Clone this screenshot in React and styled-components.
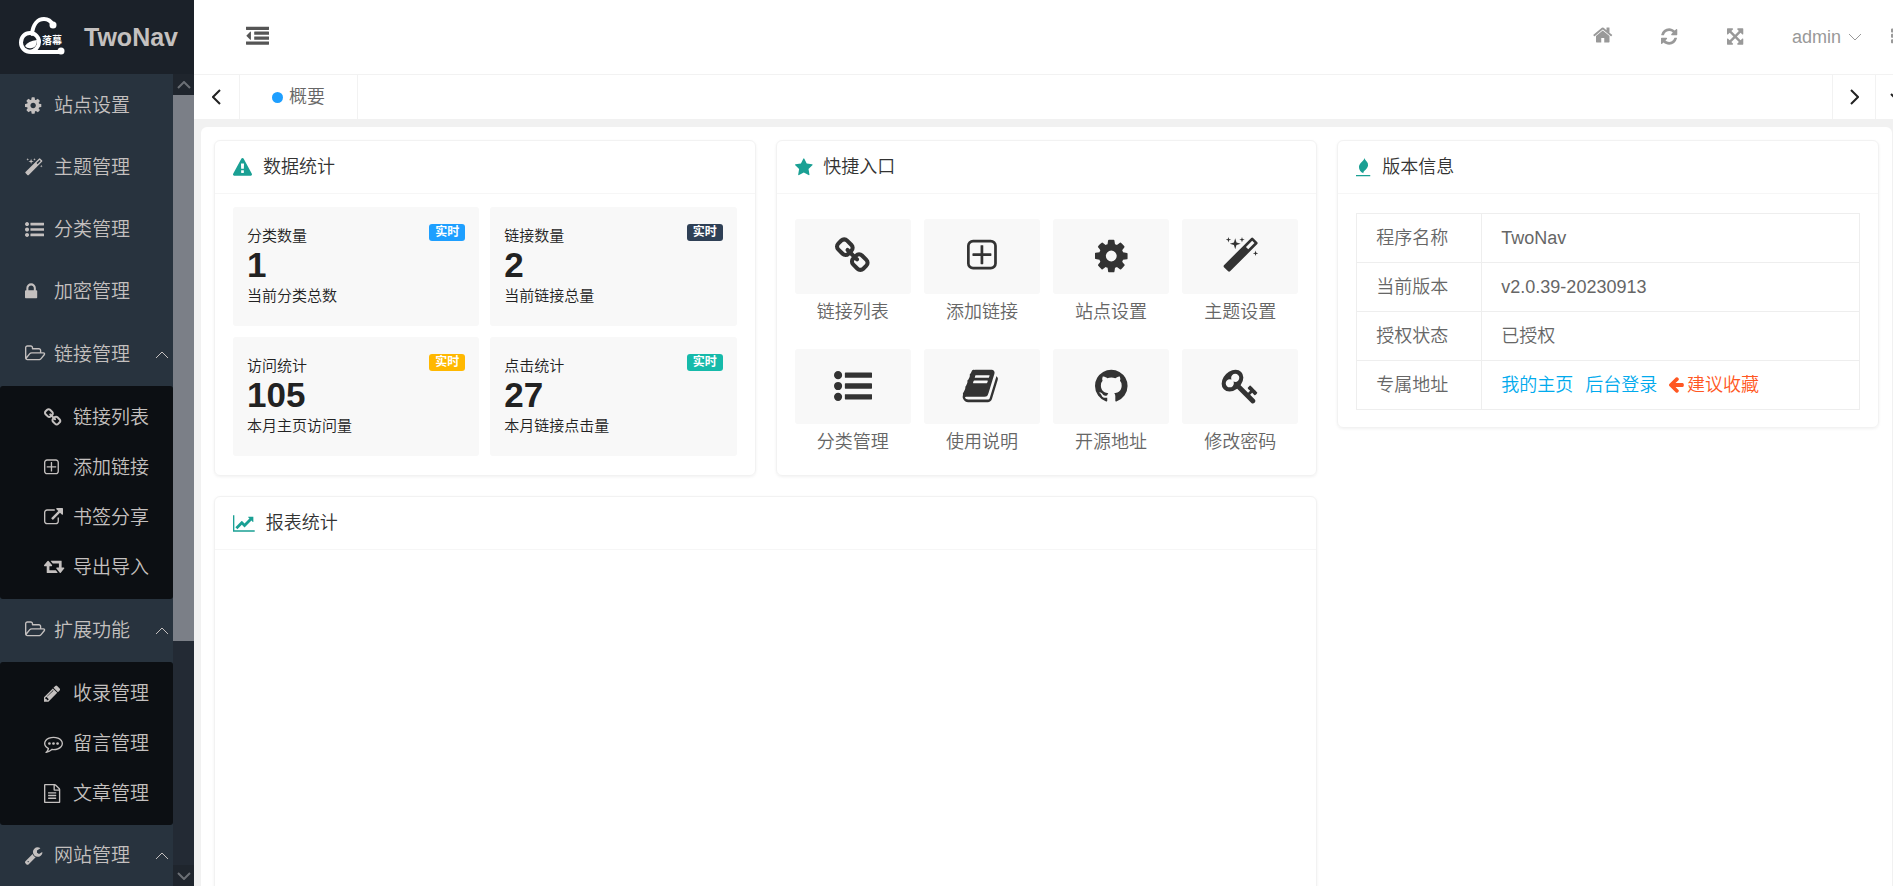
import React from "react";
import styled, { createGlobalStyle } from "styled-components";

// [viewBox, path]
const shapes = {
	cog: ["128 0 1536 1792", "M1152 896q0-106-75-181t-181-75-181 75-75 181 75 181 181 75 181-75 75-181zm512-109v222q0 12-8 23t-20 13l-185 28q-19 54-39 91 35 50 107 138 10 12 10 25t-9 23q-27 37-99 108t-94 71q-12 0-26-9l-138-108q-44 23-91 38-16 136-29 186-7 28-36 28h-222q-14 0-24.5-8.5t-11.5-21.5l-28-184q-49-16-90-37l-141 107q-10 9-25 9-14 0-25-11-126-114-165-168-7-10-7-23 0-12 8-23 15-21 51-66.5t54-70.5q-27-50-41-99l-183-27q-13-2-21-12.5t-8-23.5v-222q0-12 8-23t19-13l186-28q14-46 39-92-40-57-107-138-10-12-10-24 0-10 9-23 26-36 98.5-107.5t94.5-71.5q13 0 26 10l138 107q44-23 91-38 16-136 29-186 7-28 36-28h222q14 0 24.5 8.5t11.5 21.5l28 184q49 16 90 37l142-107q9-9 24-9 13 0 25 10 129 119 165 170 7 8 7 22 0 12-8 23-15 21-51 66.5t-54 70.5q26 50 41 98l183 28q13 2 21 12.5t8 23.5z"],
	magic: ["64 0 1664 1792", "M1254 581l293-293-107-107-293 293zm447-293q0 27-18 45l-1286 1286q-18 18-45 18t-45-18l-198-198q-18-18-18-45t18-45l1286-1286q18-18 45-18t45 18l198 198q18 18 18 45zm-1351-190l98 30-98 30-30 98-30-98-98-30 98-30 30-98zm350 162l196 60-196 60-60 196-60-196-196-60 196-60 60-196zm930 478l98 30-98 30-30 98-30-98-98-30 98-30 30-98zm-640-640l98 30-98 30-30 98-30-98-98-30 98-30 30-98z"],
	list: ["0 0 1792 1792", "M384 1408q0 80-56 136t-136 56-136-56-56-136 56-136 136-56 136 56 56 136zm0-512q0 80-56 136t-136 56-136-56-56-136 56-136 136-56 136 56 56 136zm1408 416v192q0 13-9.5 22.5t-22.5 9.5h-1216q-13 0-22.5-9.5t-9.5-22.5v-192q0-13 9.5-22.5t22.5-9.5h1216q13 0 22.5 9.5t9.5 22.5zm-1408-928q0 80-56 136t-136 56-136-56-56-136 56-136 136-56 136 56 56 136zm1408 416v192q0 13-9.5 22.5t-22.5 9.5h-1216q-13 0-22.5-9.5t-9.5-22.5v-192q0-13 9.5-22.5t22.5-9.5h1216q13 0 22.5 9.5t9.5 22.5zm0-512v192q0 13-9.5 22.5t-22.5 9.5h-1216q-13 0-22.5-9.5t-9.5-22.5v-192q0-13 9.5-22.5t22.5-9.5h1216q13 0 22.5 9.5t9.5 22.5z"],
	lock: ["320 0 1152 1792", "M640 768h512v-192q0-106-75-181t-181-75-181 75-75 181v192zm832 96v576q0 40-28 68t-68 28h-960q-40 0-68-28t-28-68v-576q0-40 28-68t68-28h32v-192q0-184 132-316t316-132 316 132 132 316v192h32q40 0 68 28t28 68z"],
	folder: ["-64 0 1910 1792", "M1717 931q0-35-53-35h-1088q-40 0-85.5 21.5t-71.5 52.5l-294 363q-18 24-18 40 0 35 53 35h1088q40 0 86-22t71-53l294-363q18-22 18-39zm-1141-163h768v-160q0-40-28-68t-68-28h-576q-40 0-68-28t-28-68v-64q0-40-28-68t-68-28h-320q-40 0-68 28t-28 68v853l256-315q44-53 116-87.5t140-34.5zm1269 163q0 62-46 120l-295 363q-43 53-116 87.5t-140 34.5h-1088q-92 0-158-66t-66-158v-960q0-92 66-158t158-66h320q92 0 158 66t66 158v32h544q92 0 158 66t66 158v160h192q54 0 99 24.5t67 70.5q15 32 15 68z"],
	link: ["80 0 1632 1792", "M1520 1216q0-40-28-68l-208-208q-28-28-68-28-42 0-72 32 3 3 19 18.5t21.5 21.5 15 19 13 25.5 3.5 27.5q0 40-28 68t-68 28q-15 0-27.5-3.5t-25.5-13-19-15-21.5-21.5-18.5-19q-33 31-33 73 0 40 28 68l206 207q27 27 68 27 40 0 68-26l147-146q28-28 28-67zm-703-705q0-40-28-68l-206-207q-28-28-68-28-39 0-68 27l-147 146q-28 28-28 67 0 40 28 68l208 208q27 27 68 27 42 0 72-31-3-3-19-18.5t-21.5-21.5-15-19-13-25.5-3.5-27.5q0-40 28-68t68-28q15 0 27.5 3.5t25.5 13 19 15 21.5 21.5 18.5 19q33-31 33-73zm895 705q0 120-85 203l-147 146q-83 83-203 83-121 0-204-85l-206-207q-83-83-83-203 0-123 88-209l-88-88q-86 88-208 88-120 0-204-84l-208-208q-84-84-84-204t85-203l147-146q83-83 203-83 121 0 204 85l206 207q83 83 83 203 0 123-88 209l88 88q86-88 208-88 120 0 204 84l208 208q84 84 84 204z"],
	plus: ["192 0 1408 1792", "M1344 800v64q0 14-9 23t-23 9h-352v352q0 14-9 23t-23 9h-64q-14 0-23-9t-9-23v-352h-352q-14 0-23-9t-9-23v-64q0-14 9-23t23-9h352v-352q0-14 9-23t23-9h64q14 0 23 9t9 23v352h352q14 0 23 9t9 23zm128 448v-832q0-66-47-113t-113-47h-832q-66 0-113 47t-47 113v832q0 66 47 113t113 47h832q66 0 113-47t47-113zm128-832v832q0 119-84.5 203.5t-203.5 84.5h-832q-119 0-203.5-84.5t-84.5-203.5v-832q0-119 84.5-203.5t203.5-84.5h832q119 0 203.5 84.5t84.5 203.5z"],
	external: ["0 0 1792 1792", "M1408 928v320q0 119-84.5 203.5t-203.5 84.5h-832q-119 0-203.5-84.5t-84.5-203.5v-832q0-119 84.5-203.5t203.5-84.5h704q14 0 23 9t9 23v64q0 14-9 23t-23 9h-704q-66 0-113 47t-47 113v832q0 66 47 113t113 47h832q66 0 113-47t47-113v-320q0-14 9-23t23-9h64q14 0 23 9t9 23zm384-864v512q0 26-19 45t-45 19-45-19l-176-176-652 652q-10 10-23 10t-23-10l-114-114q-10-10-10-23t10-23l652-652-176-176q-19-19-19-45t19-45 45-19h512q26 0 45 19t19 45z"],
	retweet: ["0 128 1920 1792", "M1280 1504q0 13-9.5 22.5t-22.5 9.5h-960q-8 0-13.5-2t-9-7-5.5-8-3-11.5-1-11.5v-600h-192q-26 0-45-19t-19-45q0-24 15-41l320-384q19-22 49-22t49 22l320 384q15 17 15 41 0 26-19 45t-45 19h-192v384h576q16 0 25 11l160 192q7 10 7 21zm640-416q0 24-15 41l-320 384q-20 23-49 23t-49-23l-320-384q-15-17-15-41 0-26 19-45t45-19h192v-384h-576q-16 0-25-12l-160-192q-7-9-7-20 0-13 9.5-22.5t22.5-9.5h960q8 0 13.5 2t9 7 5.5 8 3 11.5 1 11.5v600h192q26 0 45 19t19 45z"],
	pencil: ["128 0 1515 1792", "M491 1536l91-91-235-235-91 91v107h128v128h107zm523-928q0-22-22-22-10 0-17 7l-542 542q-7 7-7 17 0 22 22 22 10 0 17-7l542-542q7-7 7-17zm-54-192l416 416-832 832h-416v-416zm683 96q0 53-37 90l-166 166-416-416 166-165q36-38 90-38 53 0 91 38l235 234q37 39 37 91z"],
	comment: ["0 0 1792 1792", "M640 896q0 53-37.5 90.5t-90.5 37.5-90.5-37.5-37.5-90.5 37.5-90.5 90.5-37.5 90.5 37.5 37.5 90.5zm384 0q0 53-37.5 90.5t-90.5 37.5-90.5-37.5-37.5-90.5 37.5-90.5 90.5-37.5 90.5 37.5 37.5 90.5zm384 0q0 53-37.5 90.5t-90.5 37.5-90.5-37.5-37.5-90.5 37.5-90.5 90.5-37.5 90.5 37.5 37.5 90.5zm-512-512q-204 0-381.5 69.5t-282 187.5-104.5 255q0 112 71.5 213.5t201.5 175.5l87 50-27 96q-24 91-70 172 152-63 275-171l43-38 57 6q69 8 130 8 204 0 381.5-69.5t282-187.5 104.5-255-104.5-255-282-187.5-381.5-69.5zm896 512q0 174-120 321.5t-326 233-450 85.5q-70 0-145-8-198 175-460 242-49 14-114 22h-5q-15 0-27-10.5t-16-27.5v-1q-3-4-.5-12t2-10 4.5-9.5l6-9 7-8.5 8-9q7-8 31-34.5t34.5-38 31-39.5 32.5-51 27-59 26-76q-157-89-247.5-220t-90.5-281q0-174 120-321.5t326-233 450-85.5 450 85.5 326 233 120 321.5z"],
	file: ["128 0 1536 1792", "M1596 380q28 28 48 76t20 88v1152q0 40-28 68t-68 28h-1344q-40 0-68-28t-28-68v-1600q0-40 28-68t68-28h896q40 0 88 20t76 48zm-444-244v376h376q-10-29-22-41l-313-313q-12-12-41-22zm384 1528v-1024h-416q-40 0-68-28t-28-68v-416h-768v1536h1280zm-1024-864q0-14 9-23t23-9h704q14 0 23 9t9 23v64q0 14-9 23t-23 9h-704q-14 0-23-9t-9-23v-64zm736 224q14 0 23 9t9 23v64q0 14-9 23t-23 9h-704q-14 0-23-9t-9-23v-64q0-14 9-23t23-9h704zm0 256q14 0 23 9t9 23v64q0 14-9 23t-23 9h-704q-14 0-23-9t-9-23v-64q0-14 9-23t23-9h704z"],
	wrench: ["85 0 1641 1792", "M448 1472q0-26-19-45t-45-19-45 19-19 45 19 45 45 19 45-19 19-45zm644-420l-682 682q-37 37-90 37-52 0-91-37l-106-108q-38-36-38-90 0-53 38-91l681-681q39 98 114.5 173.5t173.5 114.5zm634-435q0 39-23 106-47 134-164.5 217.5t-258.5 83.5q-185 0-316.5-131.5t-131.5-316.5 131.5-316.5 316.5-131.5q58 0 121.5 16.5t107.5 46.5q16 11 16 28t-16 28l-293 169v224l193 107q5-3 79-48.5t135.5-81 70.5-35.5q15 0 23.5 10t8.5 25z"],
	outdent: ["0 0 1792 1792", "M384 544v576q0 13-9.5 22.5t-22.5 9.5q-14 0-23-9l-288-288q-9-9-9-23t9-23l288-288q9-9 23-9 13 0 22.5 9.5t9.5 22.5zm1408 768v192q0 13-9.5 22.5t-22.5 9.5h-1728q-13 0-22.5-9.5t-9.5-22.5v-192q0-13 9.5-22.5t22.5-9.5h1728q13 0 22.5 9.5t9.5 22.5zm0-384v192q0 13-9.5 22.5t-22.5 9.5h-1088q-13 0-22.5-9.5t-9.5-22.5v-192q0-13 9.5-22.5t22.5-9.5h1088q13 0 22.5 9.5t9.5 22.5zm0-384v192q0 13-9.5 22.5t-22.5 9.5h-1088q-13 0-22.5-9.5t-9.5-22.5v-192q0-13 9.5-22.5t22.5-9.5h1088q13 0 22.5 9.5t9.5 22.5zm0-384v192q0 13-9.5 22.5t-22.5 9.5h-1728q-13 0-22.5-9.5t-9.5-22.5v-192q0-13 9.5-22.5t22.5-9.5h1728q13 0 22.5 9.5t9.5 22.5z"],
	home: ["64 128 1664 1792", "M1472 992v480q0 26-19 45t-45 19h-384v-384h-256v384h-384q-26 0-45-19t-19-45v-480q0-1 .5-3t.5-3l575-474 575 474q1 2 1 6zm223-69l-62 74q-8 9-21 11h-3q-13 0-21-7l-692-577-692 577q-12 8-24 7-13-2-21-11l-62-74q-8-10-7-23.5t11-21.5l719-599q32-26 76-26t76 26l244 204v-195q0-14 9-23t23-9h192q14 0 23 9t9 23v408l219 182q10 8 11 21.5t-7 23.5z"],
	refresh: ["128 0 1536 1792", "M1639 1056q0 5-1 7-64 268-268 434.5t-478 166.5q-146 0-282.5-55t-243.5-157l-129 129q-19 19-45 19t-45-19-19-45v-448q0-26 19-45t45-19h448q26 0 45 19t19 45-19 45l-137 137q71 66 161 102t187 36q134 0 250-65t186-179q11-17 53-117 8-23 30-23h192q13 0 22.5 9.5t9.5 22.5zm25-800v448q0 26-19 45t-45 19h-448q-26 0-45-19t-19-45 19-45l138-138q-148-137-349-137-134 0-250 65t-186 179q-11 17-53 117-8 23-30 23h-199q-13 0-22.5-9.5t-9.5-22.5v-7q65-268 270-434.5t480-166.5q146 0 284 55.5t245 156.5l130-129q19-19 45-19t45 19 19 45z"],
	expand: ["128 0 1536 1792", "M1411 541l-355 355 355 355 144-144q29-31 70-14 39 17 39 59v448q0 26-19 45t-45 19h-448q-42 0-59-40-17-39 14-69l144-144-355-355-355 355 144 144q31 30 14 69-17 40-59 40h-448q-26 0-45-19t-19-45v-448q0-42 40-59 39-17 69 14l144 144 355-355-355-355-144 144q-19 19-45 19-12 0-24-5-40-17-40-59v-448q0-26 19-45t45-19h448q42 0 59 40 17 39-14 69l-144 144 355 355 355-355-144-144q-31-30-14-69 17-40 59-40h448q26 0 45 19t19 45v448q0 42-39 59-13 5-25 5-26 0-45-19z"],
	more: ["704 0 384 1792", "M1088 1248v192q0 40-28 68t-68 28h-192q-40 0-68-28t-28-68v-192q0-40 28-68t68-28h192q40 0 68 28t28 68zm0-512v192q0 40-28 68t-68 28h-192q-40 0-68-28t-28-68v-192q0-40 28-68t68-28h192q40 0 68 28t28 68zm0-512v192q0 40-28 68t-68 28h-192q-40 0-68-28t-28-68v-192q0-40 28-68t68-28h192q40 0 68 28t28 68z"],
	warning: ["0 0 1792 1792", "M1024 1375v-190q0-14-9.5-23.5t-22.5-9.5h-192q-13 0-22.5 9.5t-9.5 23.5v190q0 14 9.5 23.5t22.5 9.5h192q13 0 22.5-9.5t9.5-23.5zm-2-374l18-459q0-12-10-19-13-11-24-11h-220q-11 0-24 11-10 7-10 21l17 457q0 10 10 16.5t24 6.5h185q14 0 23.5-6.5t10.5-16.5zm-14-934l768 1408q35 63-2 126-17 29-46.5 46t-63.5 17h-1536q-34 0-63.5-17t-46.5-46q-37-63-2-126l768-1408q17-31 47-49t65-18 65 18 47 49z"],
	star: ["64 0 1664 1792", "M1728 647q0 22-26 48l-363 354 86 500q1 7 1 20 0 21-10.5 35.5t-30.5 14.5q-19 0-40-12l-449-236-449 236q-22 12-40 12-21 0-31.5-14.5t-10.5-35.5q0-6 2-20l86-500-364-354q-25-27-25-48 0-37 56-46l502-73 225-455q19-41 49-41t49 41l225 455 502 73q56 9 56 46z"],
	fire: ["0 0 1408 1792", "M0 1600h1344v128H0zM800 0C780 250 300 480 280 820c-10 280 150 510 420 620-20-140 60-210 180-310 200-170 300-350 240-610C1080 350 860 250 800 0z"],
	chart: ["-128 0 2048 1792", "M1920 1536v128h-2048v-1536h128v1408h1920zm-128-1248v435q0 21-19.5 29.5t-35.5-7.5l-121-121-633 633q-10 10-23 10t-23-10l-233-233-416 416-192-192 585-585q10-10 23-10t23 10l233 233 464-464-121-121q-16-16-7.5-35.5t29.5-19.5h435q14 0 23 9t9 23z"],
	book: ["64 0 1664 1792", "M1639 478q40 57 18 129l-275 906q-19 64-76.5 107.5t-122.5 43.5h-923q-77 0-148.5-53.5t-99.5-131.5q-24-67-2-127 0-4 3-27t4-37q1-8-3-21.5t-3-19.5q2-11 8-21t16.5-23.5 16.5-23.5q23-38 45-91.5t30-91.5q3-10 .5-30t-.5-28q3-11 17-28t17-23q21-36 42-92t25-90q1-9-2.5-32t.5-28q4-13 22-30.5t22-22.5q19-26 42.5-84.5t27.5-96.5q1-8-3-25.5t-2-26.5q2-8 9-18t18-23 17-21q8-12 16.5-30.5t15-35 16-36 19.5-32 26.5-23.5 36-11.5 47.5 5.5l-1 3q38-9 51-9h761q74 0 114 56t18 130l-274 906q-36 119-71.5 153.5t-128.5 34.5h-869q-27 0-38 15-11 16-1 43 24 70 144 70h923q29 0 56-15.5t35-41.5l300-987q7-22 5-57 38 15 59 43zm-1064 2q-4 13 2 22.5t20 9.5h608q13 0 25.5-9.5t16.5-22.5l21-64q4-13-2-22.5t-20-9.5h-608q-13 0-25.5 9.5t-16.5 22.5zm-83 256q-4 13 2 22.5t20 9.5h608q13 0 25.5-9.5t16.5-22.5l21-64q4-13-2-22.5t-20-9.5h-608q-13 0-25.5 9.5t-16.5 22.5z"],
	github: ["128 0 1536 1792", "M896 128q209 0 385.5 103t279.5 279.5 103 385.5q0 251-146.5 451.5t-378.5 277.5q-27 5-40-7t-13-30q0-3 .5-76.5t.5-134.5q0-97-52-142 57-6 102.5-18t94-39 81-66.5 53-105 20.5-150.5q0-119-79-206 37-91-8-204-28-9-81 11t-92 44l-38 24q-93-26-192-26t-192 26q-16-11-42.5-27t-83.5-38.5-85-13.5q-45 113-8 204-79 87-79 206 0 85 20.5 150t52.5 105 80.5 67 94 39 102.5 18q-39 36-49 103-21 10-45 15t-57 5-65.5-21.5-55.5-62.5q-19-32-48.5-52t-49.5-24l-20-3q-21 0-29 4.5t-5 11.5 9 14 13 12l7 5q22 10 43.5 38t31.5 51l10 23q13 38 44 61.5t67 30 69.5 7 55.5-3.5l23-4q0 38 .5 88.5t.5 54.5q0 18-13 30t-40 7q-232-77-378.5-277.5t-146.5-451.5q0-209 103-385.5t279.5-279.5 385.5-103z"],
	key: ["64 0 1664 1792", "M832 512q0-80-56-136t-136-56-136 56-56 136q0 42 19 83-41-19-83-19-80 0-136 56t-56 136 56 136 136 56 136-56 56-136q0-42-19-83 41 19 83 19 80 0 136-56t56-136zm851 704q0 17-49 66t-66 49q-9 0-28.5-16t-36.5-33-38.5-40-24.5-26l-96 96 220 220q28 28 28 68 0 42-39 81t-81 39q-40 0-68-28l-671-671q-176 131-365 131-163 0-265.5-102.5t-102.5-265.5q0-160 95-313t248-248 313-95q163 0 265.5 102.5t102.5 265.5q0 189-131 365l355 355 96-96q-3-3-26-24.5t-40-38.5-33-36.5-16-28.5q0-17 49-66t66-49q13 0 23 10 6 6 46 44.5t82 79.5 86.5 86 73 78 28.5 41z"],
	arrow: ["64 64 1472 1792", "M1536 896v128q0 53-32.5 90.5t-84.5 37.5h-704l293 294q38 36 38 90t-38 90l-75 76q-37 37-90 37-52 0-91-37l-651-652q-37-37-37-90 0-52 37-91l651-650q38-38 91-38 52 0 90 38l75 74q38 38 38 91t-38 91l-293 293h704q52 0 84.5 37.5t32.5 90.5z"],
};

const Icon = ({ name, size = 19 }) => (
	<Glyph viewBox={shapes[name][0]} $size={size} aria-hidden='true'>
		<path d={shapes[name][1]} />
	</Glyph>
);

const arrows = {
	up: "M1 7 7 1 13 7",
	down: "M1 1 7 7 13 1",
	left: "M8 1 1 8 8 15",
	right: "M1 1 8 8 1 15",
};

const Chevron = ({ to, weight = 1 }) => {
	const flat = to === "up" || to === "down";
	return (
		<Line
			width={flat ? 14 : 9}
			height={flat ? 8 : 16}
			strokeWidth={weight}
			aria-hidden='true'
		>
			<path d={arrows[to]} />
		</Line>
	);
};

const menu = [
	{ icon: "cog", text: "站点设置" },
	{ icon: "magic", text: "主题管理" },
	{ icon: "list", text: "分类管理" },
	{ icon: "lock", text: "加密管理" },
	{
		icon: "folder",
		text: "链接管理",
		children: [
			{ icon: "link", text: "链接列表" },
			{ icon: "plus", text: "添加链接" },
			{ icon: "external", text: "书签分享" },
			{ icon: "retweet", text: "导出导入" },
		],
	},
	{
		icon: "folder",
		text: "扩展功能",
		children: [
			{ icon: "pencil", text: "收录管理" },
			{ icon: "comment", text: "留言管理" },
			{ icon: "file", text: "文章管理" },
		],
	},
	{ icon: "wrench", text: "网站管理", children: [] },
];

const stats = [
	{ title: "分类数量", value: 1, note: "当前分类总数", color: "#1e9fff" },
	{ title: "链接数量", value: 2, note: "当前链接总量", color: "#2f4056" },
	{ title: "访问统计", value: 105, note: "本月主页访问量", color: "#ffb800" },
	{ title: "点击统计", value: 27, note: "本月链接点击量", color: "#16baaa" },
];

const shortcuts = [
	{ icon: "link", text: "链接列表" },
	{ icon: "plus", text: "添加链接" },
	{ icon: "cog", text: "站点设置" },
	{ icon: "magic", text: "主题设置" },
	{ icon: "list", text: "分类管理" },
	{ icon: "book", text: "使用说明" },
	{ icon: "github", text: "开源地址" },
	{ icon: "key", text: "修改密码" },
];

export default function App() {
	return (
		<Page>
			<GlobalStyle />
			<Sidebar>
				<Brand href='#'>
					<Logo />
					<h1>TwoNav</h1>
				</Brand>
				<MenuArea>
					<Menu>
						{menu.map((item) => (
							<li key={item.text}>
								<MenuLink href='#' $open={item.children?.length > 0}>
									<span className='icon'>
										<Icon name={item.icon} />
									</span>
									{item.text}
									{item.children && (
										<span className='arrow'>
											<Chevron to='up' />
										</span>
									)}
								</MenuLink>
								{item.children?.length > 0 && (
									<SubMenu>
										{item.children.map((child) => (
											<li key={child.text}>
												<SubLink href='#'>
													<span className='icon'>
														<Icon name={child.icon} />
													</span>
													{child.text}
												</SubLink>
											</li>
										))}
									</SubMenu>
								)}
							</li>
						))}
					</Menu>
					<ScrollBar>
						<ScrollButton>
							<Chevron to='up' weight={2} />
						</ScrollButton>
						<ScrollThumb />
						<ScrollTrack />
						<ScrollButton>
							<Chevron to='down' weight={2} />
						</ScrollButton>
					</ScrollBar>
				</MenuArea>
			</Sidebar>
			<Main>
				<Header>
					<HeaderButton $dark aria-label='收起菜单'>
						<Icon name='outdent' size={23} />
					</HeaderButton>
					<Actions>
						<HeaderButton aria-label='主页'>
							<Icon name='home' size={21} />
						</HeaderButton>
						<HeaderButton aria-label='刷新'>
							<Icon name='refresh' />
						</HeaderButton>
						<HeaderButton aria-label='全屏'>
							<Icon name='expand' />
						</HeaderButton>
						<UserMenu>
							<HeaderButton>
								admin
								<Chevron to='down' />
							</HeaderButton>
							<HeaderButton aria-label='更多'>
								<Icon name='more' />
							</HeaderButton>
						</UserMenu>
					</Actions>
				</Header>
				<TabBar>
					<TabButton aria-label='向左'>
						<Chevron to='left' weight={2} />
					</TabButton>
					<Tab href='#'>概要</Tab>
					<TabEnd>
						<TabButton aria-label='向右'>
							<Chevron to='right' weight={2} />
						</TabButton>
						<TabButton aria-label='标签操作'>
							<Chevron to='down' weight={2} />
						</TabButton>
					</TabEnd>
				</TabBar>
				<Content>
					<Panel>
						<Card>
							<CardTitle>
								<Icon name='warning' />
								数据统计
							</CardTitle>
							<Stats>
								{stats.map((s) => (
									<Stat key={s.title}>
										<div>
											<h3>{s.title}</h3>
											<strong>{s.value}</strong>
											<p>{s.note}</p>
										</div>
										<Badge $color={s.color}>实时</Badge>
									</Stat>
								))}
							</Stats>
						</Card>
						<Card>
							<CardTitle>
								<Icon name='star' />
								快捷入口
							</CardTitle>
							<Shortcuts>
								{shortcuts.map((s) => (
									<Shortcut href='#' key={s.text}>
										<span className='tile'>
											<Icon name={s.icon} size={38} />
										</span>
										{s.text}
									</Shortcut>
								))}
							</Shortcuts>
						</Card>
						<Card>
							<CardTitle>
								<Icon name='fire' />
								版本信息
							</CardTitle>
							<CardBody>
								<InfoTable>
									<tbody>
										<tr>
											<th scope='row'>程序名称</th>
											<td>TwoNav</td>
										</tr>
										<tr>
											<th scope='row'>当前版本</th>
											<td>v2.0.39-20230913</td>
										</tr>
										<tr>
											<th scope='row'>授权状态</th>
											<td>已授权</td>
										</tr>
										<tr>
											<th scope='row'>专属地址</th>
											<td>
												<Links>
													<a href='#'>我的主页</a>
													<a href='#'>后台登录</a>
													<Tip>
														<Icon name='arrow' size={18} />
														建议收藏
													</Tip>
												</Links>
											</td>
										</tr>
									</tbody>
								</InfoTable>
							</CardBody>
						</Card>
						<Card $wide>
							<CardTitle>
								<Icon name='chart' />
								报表统计
							</CardTitle>
							<Chart />
						</Card>
					</Panel>
				</Content>
			</Main>
		</Page>
	);
}

const Logo = () => (
	<Mark viewBox='0 0 48 42' aria-hidden='true'>
		<path
			d='M14 18C15 8 20 3 26 3c4 0 7 2 9 6M43 36H13C7 36 3 32 3 26.500S7 17 12 17s9 4 9 9-4 9-9 10'
			fill='none'
			stroke='#fff'
			strokeWidth='4'
			strokeLinecap='round'
		/>
		<circle cx='35' cy='9' r='3.5' fill='#fff' />
		<circle cx='43' cy='35' r='3.5' fill='#fff' />
		<path d='M7 30q3-5 12-6 0 7-5 8-5 1-7-2z' fill='#fff' />
		<text x='24' y='28'>
			落幕
		</text>
	</Mark>
);

const GlobalStyle = createGlobalStyle`
	* {
		box-sizing: border-box;
	}
	body {
		margin: 0;
		overflow: hidden;
		background: #f1f1f1;
		color: #333;
		font: 350 18px/24px "Liberation Sans", "Noto Sans CJK SC", sans-serif;
	}
	a {
		color: inherit;
		text-decoration: none;
	}
	ul, h1, h2, h3, p {
		margin: 0;
		padding: 0;
		list-style: none;
		font-weight: inherit;
	}
	button {
		padding: 0;
		border: 0;
		background: none;
		font: inherit;
		cursor: pointer;
	}
`;

const Glyph = styled.svg`
	display: block;
	flex: none;
	height: ${(p) => p.$size}px;
	overflow: visible;
	fill: currentColor;
`;

const Line = styled.svg`
	display: block;
	flex: none;
	fill: none;
	stroke: currentColor;
`;

const Mark = styled.svg`
	width: 48px;
	height: 42px;
	text {
		fill: #fff;
		font-size: 10px;
		font-weight: 700;
	}
`;

const Page = styled.div`
	display: flex;
	height: 100vh;
`;

const Sidebar = styled.aside`
	display: flex;
	flex: none;
	flex-direction: column;
	width: 194px;
	background: #28333e;
	color: #c4c0bf;
`;

const Brand = styled.a`
	display: flex;
	flex: none;
	align-items: center;
	gap: 18px;
	height: 74px;
	padding-left: 18px;
	background: #1b2129;
	h1 {
		font-size: 25px;
		font-weight: 700;
	}
`;

const MenuArea = styled.div`
	display: flex;
	flex: 1;
	min-height: 0;
`;

const Menu = styled.ul`
	flex: 1;
	padding-top: 1px;
	overflow: hidden;
	font-size: 19px;
	.icon {
		width: 29px;
		padding-bottom: 2px;
	}
`;

const MenuLink = styled.a`
	display: flex;
	align-items: center;
	height: ${(p) => (p.$open ? 63 : 62)}px;
	padding: 0 4px 0 25px;
	.arrow {
		margin-left: auto;
	}
`;

const SubMenu = styled.ul`
	padding: 7px 0 6px;
	border-radius: 3px;
	background: #0c0f13;
`;

const SubLink = styled.a`
	display: flex;
	align-items: center;
	height: 50px;
	padding-left: 44px;
`;

const ScrollBar = styled.div`
	display: flex;
	flex: none;
	flex-direction: column;
	width: 21px;
	background: #232a34;
`;

const ScrollButton = styled.div`
	display: flex;
	flex: none;
	align-items: center;
	justify-content: center;
	height: 21px;
	background: #1f252d;
	color: #6b6f75;
`;

const ScrollThumb = styled.div`
	flex: 546;
	background: #7b7f87;
`;

const ScrollTrack = styled.div`
	flex: 224;
`;

const Main = styled.main`
	display: flex;
	flex: 1;
	flex-direction: column;
	min-width: 0;
`;

const Header = styled.header`
	display: flex;
	flex: none;
	align-items: center;
	justify-content: space-between;
	height: 75px;
	padding: 0 0 1px 52px;
	overflow: hidden;
	border-bottom: 1px solid #f2f2f2;
	background: #fff;
`;

const Actions = styled.div`
	display: flex;
	gap: 49px;
	margin-right: -2px;
`;

const UserMenu = styled.div`
	display: flex;
	gap: 29px;
`;

const HeaderButton = styled.button`
	display: flex;
	align-items: center;
	gap: 7px;
	color: ${(p) => (p.$dark ? "#555" : "#999")};
`;

const TabBar = styled.nav`
	display: flex;
	flex: none;
	height: 44px;
	overflow: hidden;
	background: #fff;
`;

const TabButton = styled.button`
	display: flex;
	flex: none;
	align-items: center;
	justify-content: center;
	width: 46px;
	border-right: 1px solid #f2f2f2;
	color: #222;
`;

const Tab = styled.a`
	display: flex;
	align-items: center;
	gap: 6px;
	padding: 0 32px;
	border-right: 1px solid #f2f2f2;
	color: #666;
	&::before {
		content: "";
		width: 11px;
		height: 11px;
		border-radius: 50%;
		background: #1e9fff;
	}
`;

const TabEnd = styled.div`
	display: flex;
	margin: 0 -26px 0 auto;
	border-left: 1px solid #f2f2f2;
	${TabButton} {
		width: 43px;
	}
`;

const Content = styled.div`
	flex: 1;
	min-height: 0;
	padding: 8px 1px 0 7px;
	overflow: hidden;
`;

const Panel = styled.div`
	display: grid;
	grid-template-columns: repeat(3, 1fr);
	align-items: start;
	gap: 20px;
	padding: 13px;
	border-radius: 6px;
	background: #fff;
`;

const Card = styled.section`
	grid-column: span ${(p) => (p.$wide ? 2 : 1)};
	border: 1px solid #f2f2f2;
	border-radius: 6px;
	box-shadow: 0 1px 3px rgba(0, 0, 0, 0.06);
`;

const CardTitle = styled.h2`
	display: flex;
	align-items: center;
	gap: 11px;
	height: 53px;
	padding: 0 18px;
	border-bottom: 1px solid #f6f6f6;
	font-size: 18px;
	svg {
		color: #1aa094;
	}
`;

const CardBody = styled.div`
	padding: 19px 18px 17px;
`;

const Stats = styled.div`
	display: grid;
	grid-template-columns: 1fr 1fr;
	gap: 11px;
	padding: 13px 18px 19px;
`;

const Stat = styled.div`
	display: flex;
	align-items: flex-start;
	justify-content: space-between;
	height: 119px;
	padding: 17px 14px 0;
	border-radius: 3px;
	background: #f8f8f8;
	color: #222;
	h3,
	p {
		font-size: 15px;
	}
	strong {
		display: block;
		font-size: 35px;
		font-weight: 700;
		line-height: 34px;
	}
	p {
		line-height: 28px;
	}
`;

const Badge = styled.span`
	height: 17px;
	padding: 0 6px;
	border-radius: 3px;
	background: ${(p) => p.$color};
	color: #fff;
	font-size: 12px;
	font-weight: 700;
	line-height: 16px;
`;

const Shortcuts = styled.div`
	display: grid;
	grid-template-columns: repeat(4, 1fr);
	gap: 19px 13px;
	padding: 25px 18px 15px;
`;

const Shortcut = styled.a`
	color: #666;
	line-height: 36px;
	text-align: center;
	.tile {
		display: flex;
		align-items: center;
		justify-content: center;
		height: 75px;
		padding-bottom: 2px;
		border-radius: 3px;
		background: #f8f8f8;
		color: #333;
	}
`;

const InfoTable = styled.table`
	width: 100%;
	border-collapse: collapse;
	color: #666;
	th,
	td {
		height: 49px;
		padding: 0 19px;
		border: 1px solid #eee;
		font-weight: inherit;
		text-align: left;
	}
	th {
		width: 125px;
	}
`;

const Links = styled.div`
	display: flex;
	gap: 12px;
	color: #01aaed;
`;

const Tip = styled.span`
	display: flex;
	align-items: center;
	gap: 3px;
	color: #ff5722;
`;

const Chart = styled.div`
	height: 420px;
`;
